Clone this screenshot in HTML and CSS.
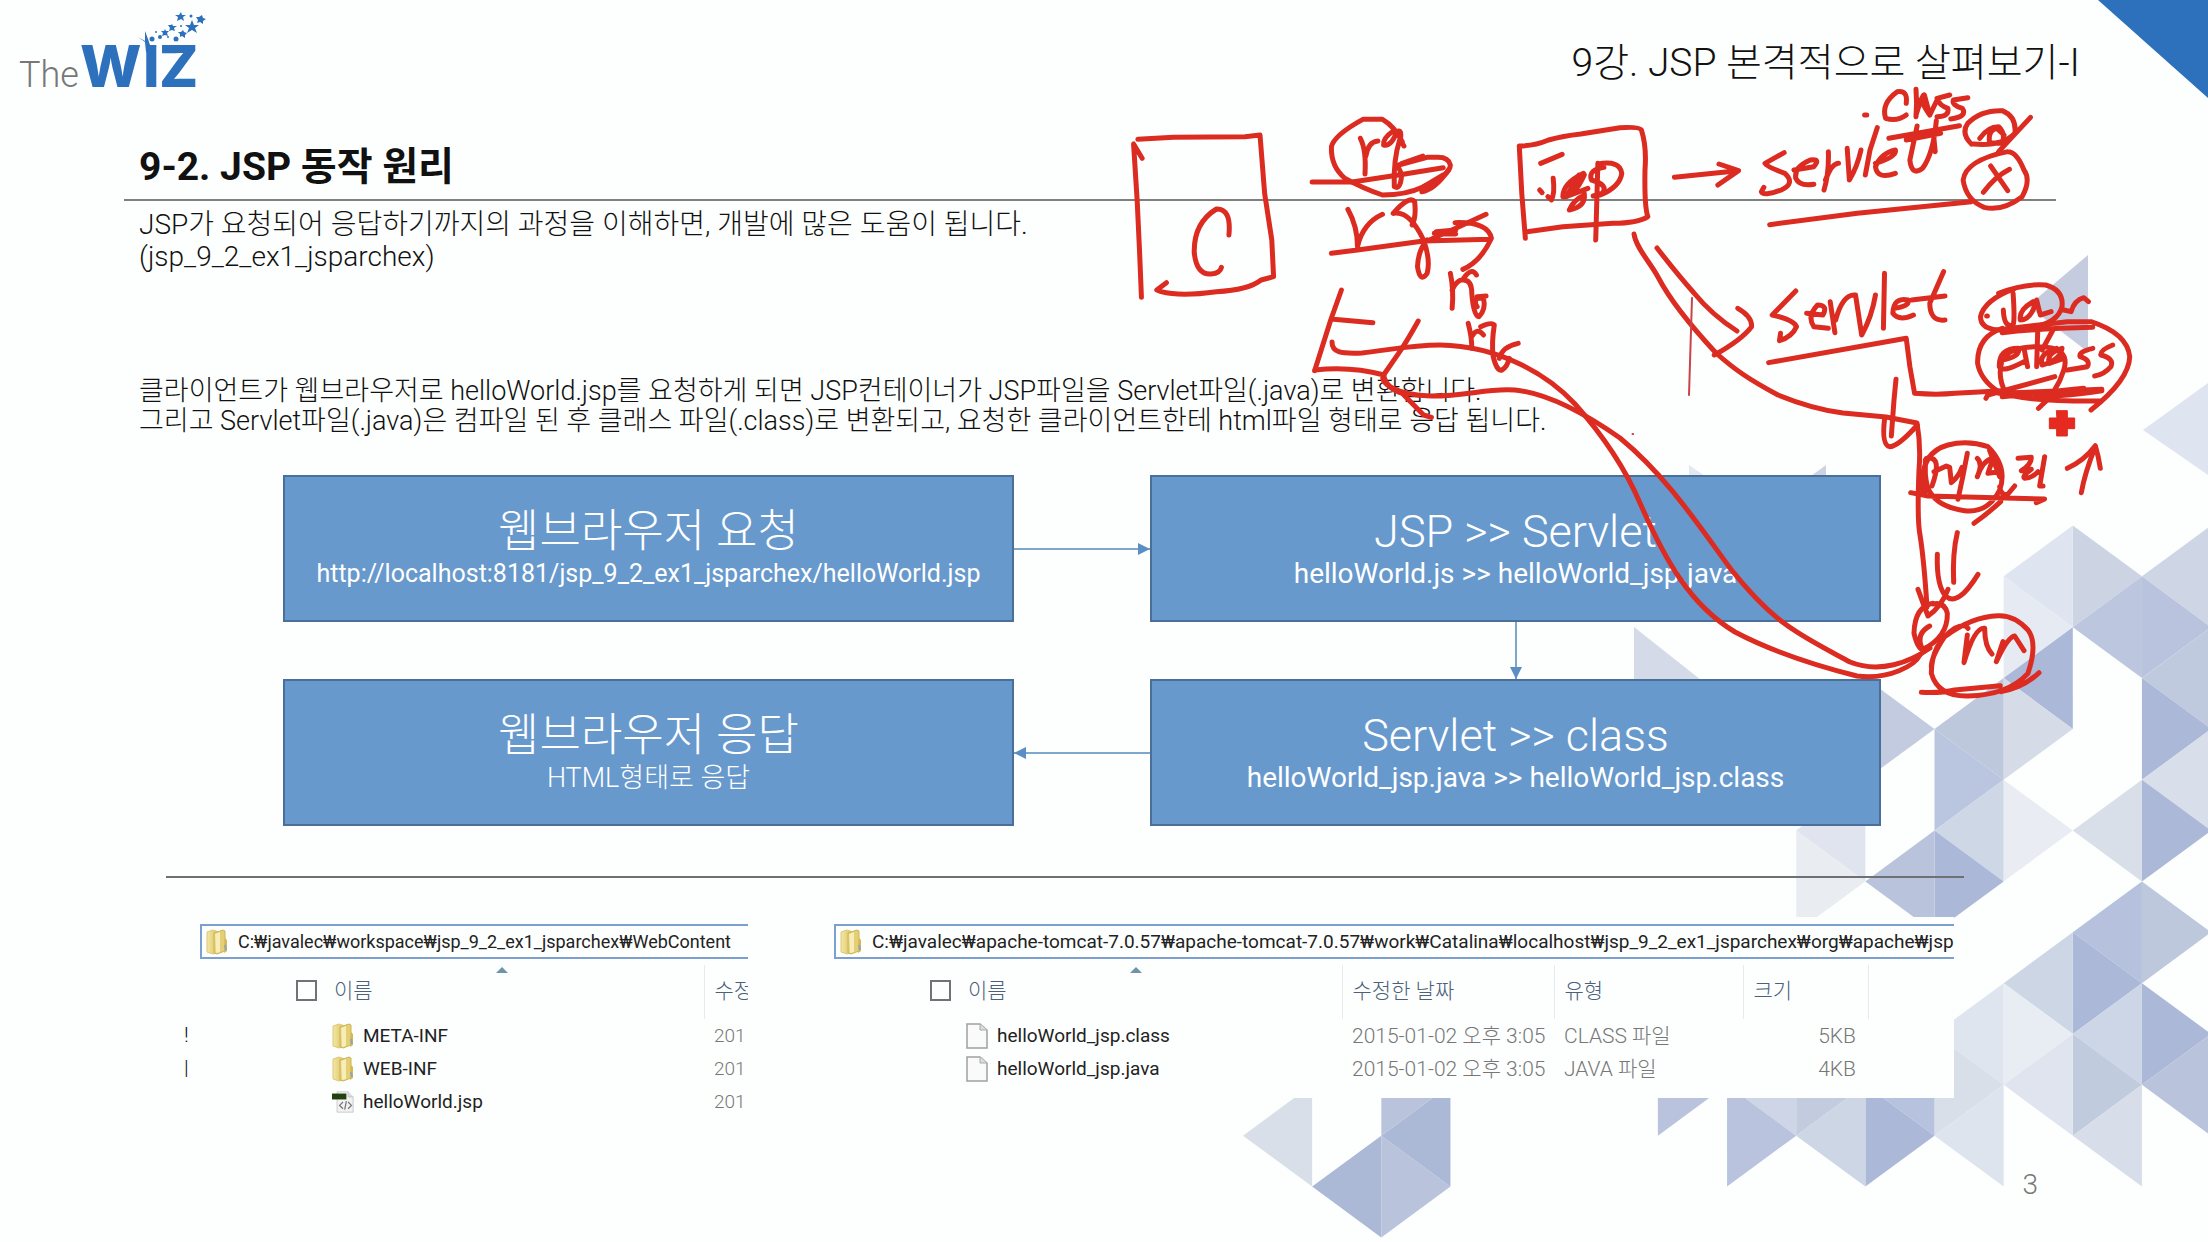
FILE: index.html
```html
<!DOCTYPE html>
<html lang="ko">
<head>
<meta charset="utf-8">
<title>9강. JSP 본격적으로 살펴보기-I</title>
<link rel="stylesheet" href="styles.css">
</head>
<body>
<svg class="defs" aria-hidden="true">
  <defs>
    <linearGradient id="gold" x1="0" x2="1"><stop offset="0" stop-color="#f3e7a4"/><stop offset="1" stop-color="#d9bf58"/></linearGradient>
    <symbol id="folder" viewBox="0 0 22 26">
      <path d="M1 3l6-2 6 2v20l-6 2-6-2z" fill="url(#gold)" stroke="#dcc97c"/>
      <path d="M8 4l9-3 2 1v20l-8 3-3-1z" fill="#e4cf74" stroke="#cdb456"/>
      <path d="M9 5l5-2v20l-4 1z" fill="#f6edb8"/>
      <path d="M19 9l2 2v11l-3 2z" fill="#d5b84f"/>
      <path d="M19 16l1 5" stroke="#8fa6b8" stroke-width="2"/>
    </symbol>
    <symbol id="page" viewBox="0 0 22 26">
      <path d="M1 1h13l7 6v18H1z" fill="#fafafa" stroke="#a0a0a0" stroke-width="1.5"/>
      <path d="M14 1v6h7" fill="#ddd" stroke="#a8a8a8"/>
    </symbol>
    <symbol id="jspfile" viewBox="0 0 26 26">
      <path d="M6 1h13l6 6v18H6z" fill="#f2f2f2" stroke="#c2c2c2"/>
      <path d="M19 1v6h6" fill="#ddd" stroke="#c2c2c2"/>
      <path d="M0 3h17v7H0z" fill="#234012"/>
      <path d="M13 13l-4 4 4 4M19 13l4 4-4 4M17 12l-2 10" fill="none" stroke="#777" stroke-width="1.5"/>
    </symbol>
  </defs>
</svg>
<div class="slide">
  <svg class="layer" viewBox="0 0 2208 1242" preserveAspectRatio="none" aria-hidden="true">
    <path fill="#2d70bc" d="M2098 0H2208V98z"/>
    <path fill="#c5cce0" d="M2088 255V352L2028 306z"/>
    <path fill="#dfe5f0" d="M2143 430L2208 383V475z"/>
    <path fill="#e3e8f1" d="M1689 465V476H1705z"/>
    <path fill="#cdd3e3" d="M1826 465V476H1811z"/>
    <path fill="#d4dae7" d="M1634 627V680H1701z"/>
    <g transform="translate(1243 525.5) scale(69.15 50.85)">
      <path fill="#ced6e5" d="M13 1l1-1v2z"/>
      <path fill="#b9c3dd" d="M13 1v2l1-1z"/>
      <path fill="#c0cadf" d="M13 3l1-1v2z"/>
      <path fill="#abb8d7" d="M13 3v2l1-1z"/>
      <path fill="#d8dfea" d="M13 5l1-1v2z"/>
      <path fill="#abb8d8" d="M13 5v2l1-1z"/>
      <path fill="#bec8dd" d="M13 7v2l1-1z"/>
      <path fill="#abb8d8" d="M13 9v2l1-1z"/>
      <path fill="#b9c4dc" d="M13 11l1-1v2z"/>
      <path fill="#ccd4e3" d="M12 0v2l1-1z"/>
      <path fill="#bcc6de" d="M12 2l1-1v2z"/>
      <path fill="#d8dfe9" d="M12 6l1-1v2z"/>
      <path fill="#b5c1dd" d="M12 8l1-1v2z"/>
      <path fill="#abb8d8" d="M12 8v2l1-1z"/>
      <path fill="#ccd6e6" d="M12 10l1-1v2z"/>
      <path fill="#c1cbde" d="M12 10v2l1-1z"/>
      <path fill="#d8dee9" d="M12 12l1-1v2z"/>
      <path fill="#dfe5f0" d="M11 1l1-1v2z"/>
      <path fill="#e6ebf3" d="M11 1v2l1-1z"/>
      <path fill="#abb8d7" d="M11 3l1-1v2z"/>
      <path fill="#d5dce8" d="M11 3v2l1-1z"/>
      <path fill="#e9edf3" d="M11 5v2l1-1z"/>
      <path fill="#cdd6e5" d="M11 9l1-1v2z"/>
      <path fill="#e8ecf3" d="M11 9v2l1-1z"/>
      <path fill="#dfe4ef" d="M11 11l1-1v2z"/>
      <path fill="#bec8dd" d="M10 4l1-1v2z"/>
      <path fill="#bac5df" d="M10 4v2l1-1z"/>
      <path fill="#cdd7e6" d="M10 6l1-1v2z"/>
      <path fill="#abb8d8" d="M10 6v2l1-1z"/>
      <path fill="#dfe5ef" d="M10 10l1-1v2z"/>
      <path fill="#d9dfe9" d="M10 10v2l1-1z"/>
      <path fill="#dee4ee" d="M10 12l1-1v2z"/>
      <path fill="#c2cbdf" d="M9 3v2l1-1z"/>
      <path fill="#b9c4dc" d="M9 7l1-1v2z"/>
      <path fill="#b6c2de" d="M9 11l1-1v2z"/>
      <path fill="#abb8d8" d="M9 11v2l1-1z"/>
      <path fill="#dfe4ee" d="M8 6l1-1v2z"/>
      <path fill="#e9edf2" d="M8 6v2l1-1z"/>
      <path fill="#c2ccde" d="M8 10v2l1-1z"/>
      <path fill="#ccd6e5" d="M8 12l1-1v2z"/>
      <path fill="#cdd5e7" d="M7 11l1-1v2z"/>
      <path fill="#b9c3dd" d="M7 11v2l1-1z"/>
      <path fill="#b9c3dd" d="M6 10v2l1-1z"/>
      <path fill="#d9dfe9" d="M0 12l1-1v2z"/>
      <path fill="#abb8d6" d="M1 13l1-1v2z"/>
      <path fill="#b9c4dc" d="M2 12v2l1-1z"/>
      <path fill="#abb8d6" d="M2 12l1-1v2z"/>
      <path fill="#b9c4dc" d="M2 10v2l1-1z"/>
    </g>
  </svg>

  <header class="top">
    <svg class="logo" viewBox="0 0 220 100" role="img" aria-label="The WIZ">
      <text class="logo-the" x="19" y="87">The</text>
      <text class="logo-wiz" x="80 143 159" y="87">WIZ</text>
      <g fill="#2d70bc">
        <path d="M138 37l7 4V31l3 8 2 6 8 2-8-1 5 10-9-4-1-10z"/>
        <path d="M192 20l2 5 5 0-4 3 2 5-5-3-5 3 2-5-4-3 5 0z"/>
        <path d="M181 12l1 3 4 0-3 2 1 4-3-2-4 2 1-4-3-2 4 0zM202 15l1 3 3 1-3 2 0 3-3-2-3 1 1-3-2-3 3 0zM183 30l1 2 3 1-2 2 0 3-3-2-2 1 0-3-2-2 3 0zM172 24l1 2 4 0-3 2 1 3-3-1-3 1 1-3-2-3 3 0zM165 29l1 2 3 0-2 2 1 3-3-1-3 1 1-3-2-2 3 0z"/>
        <circle cx="152" cy="39" r="2.500"/><circle cx="160" cy="37" r="2"/><circle cx="176" cy="39" r="2.500"/><circle cx="191" cy="16" r="1.500"/><circle cx="168" cy="37" r="1"/><circle cx="181" cy="26" r="1"/><circle cx="156" cy="32" r="1"/>
      </g>
    </svg>
    <h1 class="lecture">9강. JSP 본격적으로 살펴보기-I</h1>
  </header>

  <main class="main">
    <section class="intro">
      <h2 class="section-title">9-2. JSP 동작 원리</h2>
      <p class="lead">JSP가 요청되어 응답하기까지의 과정을 이해하면, 개발에 많은 도움이 됩니다.<br>(jsp_9_2_ex1_jsparchex)</p>
      <p class="detail">클라이언트가 웹브라우저로 helloWorld.jsp를 요청하게 되면 JSP컨테이너가 JSP파일을 Servlet파일(.java)로 변환합니다.<br>그리고 Servlet파일(.java)은 컴파일 된 후 클래스 파일(.class)로 변환되고, 요청한 클라이언트한테 html파일 형태로 응답 됩니다.</p>
    </section>

    <section class="flow">
      <div class="step"><h3>웹브라우저 요청</h3><p class="url">http://localhost:8181/jsp_9_2_ex1_jsparchex/helloWorld.jsp</p></div>
      <div class="link right"></div>
      <div class="step"><h3>JSP &gt;&gt; Servlet</h3><p>helloWorld.js &gt;&gt; helloWorld_jsp.java</p></div>
      <div class="link down"></div>
      <div class="step"><h3>웹브라우저 응답</h3><p class="plain">HTML형태로 응답</p></div>
      <div class="link left"></div>
      <div class="step"><h3>Servlet &gt;&gt; class</h3><p>helloWorld_jsp.java &gt;&gt; helloWorld_jsp.class</p></div>
    </section>

    <hr class="divider">

    <section class="explorers">
      <div class="explorer first">
        <div class="address"><svg class="icon"><use href="#folder"/></svg><span>C:₩javalec₩workspace₩jsp_9_2_ex1_jsparchex₩WebContent</span></div>
        <div class="pane">
          <div class="tree"><span>!</span><span>|</span></div>
          <table class="files">
            <thead><tr><th class="name"><input type="checkbox" aria-label="모두 선택">이름<i class="sort"></i></th><th class="date">수정</th></tr></thead>
            <tbody>
              <tr><td class="name"><svg class="icon"><use href="#folder"/></svg>META-INF</td><td>201</td></tr>
              <tr><td class="name"><svg class="icon"><use href="#folder"/></svg>WEB-INF</td><td>201</td></tr>
              <tr><td class="name"><svg class="icon"><use href="#jspfile"/></svg>helloWorld.jsp</td><td>201</td></tr>
            </tbody>
          </table>
        </div>
      </div>
      <div class="explorer second">
        <div class="address"><svg class="icon"><use href="#folder"/></svg><span>C:₩javalec₩apache-tomcat-7.0.57₩apache-tomcat-7.0.57₩work₩Catalina₩localhost₩jsp_9_2_ex1_jsparchex₩org₩apache₩jsp</span></div>
        <div class="pane">
          <table class="files">
            <thead><tr><th class="name"><input type="checkbox" aria-label="모두 선택">이름<i class="sort"></i></th><th class="date">수정한 날짜</th><th class="type">유형</th><th class="size">크기</th><th></th></tr></thead>
            <tbody>
              <tr><td class="name"><svg class="icon"><use href="#page"/></svg>helloWorld_jsp.class</td><td>2015-01-02 오후 3:05</td><td>CLASS 파일</td><td class="num">5KB</td><td></td></tr>
              <tr><td class="name"><svg class="icon"><use href="#page"/></svg>helloWorld_jsp.java</td><td>2015-01-02 오후 3:05</td><td>JAVA 파일</td><td class="num">4KB</td><td></td></tr>
            </tbody>
          </table>
        </div>
      </div>
    </section>
  </main>
  <footer class="page-no">3</footer>

  <!-- red pen strokes drawn over the slide -->
  <svg class="layer ink" viewBox="0 0 2208 1242" preserveAspectRatio="none" aria-hidden="true">
    <g>
      <path d="M1332 342C1332 352 1340 354 1362 353C1390 350 1410 345 1440 345C1500 346 1548 375 1575 404C1600 432 1625 468 1640 503C1665 560 1690 605 1735 632C1775 653 1825 668 1857 676C1890 680 1915 665 1920 655"/>
      <path d="M1315 370C1340 367 1362 369 1384 375C1378 382 1395 395 1431 396C1470 396 1485 388 1515 390C1545 393 1580 410 1620 438C1665 475 1695 520 1730 568C1775 625 1800 635 1850 662C1880 674 1910 662 1930 648"/>
      <path d="M1634 234C1636 248 1650 262 1658 277C1670 300 1690 325 1716 353C1735 370 1750 380 1778 395C1800 404 1820 410 1843 413L1886 417L1917 423Q1921 445 1919 470Q1917 520 1920 535Q1924 560 1927 607"/>
      <path d="M1657 248Q1678 275 1694 293Q1712 315 1737 331"/>
      <path class="thin" d="M1692 298L1689 395"/>
    </g>
    <g transform="translate(1120 60) scale(.35714 .33333)">
      <path d="M50 238L150 232L350 230L392 225L405 400L425 540L430 650L395 660Q360 690 270 695Q170 710 115 695L103 690L130 668M62 295L38 252L48 420L55 580L60 712"/>
      <path d="M305 525Q312 445 270 447Q205 490 208 580Q215 645 255 642Q280 640 284 622"/>
      <path d="M790 245Q770 200 735 178H680Q600 225 592 260Q590 320 630 355Q680 385 735 405Q800 405 850 380Q925 345 925 315Q920 292 890 292H860L780 315"/>
      <path d="M673 235Q690 270 686 342M688 290Q695 245 722 243M765 213Q735 235 738 255Q760 260 775 215Q790 205 785 240L795 258M783 240Q765 300 768 380Q785 390 788 350Q785 320 770 318"/>
      <path d="M538 366H650L780 345L905 323M848 288L790 310M845 395Q880 390 920 330M850 380L905 345"/>
      <path d="M638 448Q665 500 665 560Q680 490 735 463M765 460Q810 405 825 425Q830 470 818 495M765 460Q810 450 850 540Q870 600 860 640Q840 670 833 620Q835 570 860 540M592 580L665 570L850 543L1035 538M860 543L940 505L1025 463M880 520L940 522M885 515L940 510M938 488Q1030 485 1040 535Q1010 605 960 628"/>
      <path d="M925 640Q935 690 930 745M930 690Q945 655 965 660M962 655Q985 620 998 645M962 660Q985 660 985 700Q990 770 1005 770Q1025 750 1018 715H1000Q990 725 1000 740M1000 710L1025 708"/>
      <path d="M975 790Q985 830 985 865M985 830Q1000 800 1018 825M1010 800Q1040 785 1048 795Q1040 850 1045 890Q1055 935 1070 930Q1085 920 1090 895M1115 850Q1070 860 1062 895"/>
      <path d="M620 690L590 780L545 932M598 778L708 788M835 783Q800 850 780 880L738 945Q745 985 790 1000L850 1065L872 1072"/>
      <path d="M1118 258L1125 400L1135 535M1118 258Q1160 258 1200 240Q1240 228 1290 222L1400 203Q1455 200 1460 210Q1475 260 1470 330Q1468 440 1478 470Q1450 490 1380 490L1240 500L1140 515"/>
      <path d="M1178 310L1238 283M1175 390L1182 398M1213 355Q1218 400 1208 420L1198 410M1298 340Q1240 370 1240 410Q1270 415 1300 345Q1270 370 1262 405L1310 385M1285 345L1255 400M1300 400Q1305 440 1258 450Q1270 420 1300 405M1355 322Q1310 330 1320 360Q1370 375 1350 400L1325 408M1338 310L1332 540M1338 312Q1400 300 1405 340Q1400 380 1345 405"/>
      <path class="thin" d="M1435 1122h2"/>
    </g>
    <g transform="translate(1640 0) scale(.36224 .33333)">
      <path d="M95 532L270 512M218 492L272 512L215 555"/>
      <path d="M398 458L345 490Q350 500 400 520Q430 550 390 570Q340 590 335 575L342 562M425 510L480 500Q500 475 470 480Q425 500 430 535Q440 560 480 553M520 455Q522 520 508 570M512 540Q530 490 548 490M572 445L578 540Q600 500 610 450M655 383L635 450L622 525M650 490Q710 470 705 450Q665 460 650 500Q655 540 705 520M765 378L745 480Q750 530 780 505Q810 460 818 362M810 400L815 455M687 415L882 377M735 420L830 400"/>
      <path d="M620 345h6M735 310Q740 270 710 275Q665 310 678 355Q710 365 735 345M762 268Q765 310 762 350M762 345Q780 280 785 285L800 345M775 300Q790 330 800 345L820 300M855 285L820 295Q825 315 850 325Q855 350 820 350M905 293L865 300Q860 315 890 325Q905 350 858 357"/>
      <path d="M915 432Q885 400 905 370Q940 330 1000 332Q1040 350 1035 400Q1000 440 920 432M1078 352L990 455M938 415Q960 380 990 380Q1010 400 1000 430L965 428Q960 390 985 385L1005 405"/>
      <path d="M1015 455Q900 480 892 540Q900 600 950 622Q1000 635 1055 590Q1080 540 1060 510Q1040 455 1015 455M968 498L1015 572M1020 508Q980 530 948 577M358 674L600 640L915 605"/>
      <path d="M430 873L365 945Q425 960 432 980Q420 1010 385 1022L388 1000M460 940L505 945Q520 915 490 915Q460 950 480 980L520 985M525 905L538 998M540 960Q560 880 595 885M595 885L612 1005Q640 950 650 885M675 820L672 985M700 925Q745 920 740 900Q700 890 698 940Q715 965 755 945M838 815L800 910Q800 965 842 960M750 900L842 888"/>
      <path d="M355 1088L735 1015L745 1100L758 1180Q820 1185 870 1180L1000 1172M270 925Q310 950 308 980Q280 1020 205 1065"/>
      <path d="M990 880Q1060 850 1120 855Q1170 870 1165 920Q1150 990 1000 990Q940 990 940 950Q950 900 1035 865M957 948h2M1030 880Q1035 960 1030 975Q1005 985 1003 930M1085 905Q1045 930 1050 960Q1080 960 1095 900L1105 945L1135 935M1170 930L1190 935Q1200 900 1225 893L1238 905"/>
      <path d="M985 990L1180 965H1245Q1345 1000 1352 1070Q1350 1140 1245 1230M1000 998Q1100 985 1250 982M1000 985Q930 1010 932 1090Q940 1140 990 1175Q1050 1205 1270 1203M955 1195L960 1185L1145 1130M990 1180L1275 1168M1000 1190L1225 1165M1010 1185Q1100 1200 1275 1172"/>
      <path d="M1000 1080Q1050 1070 1045 1045Q990 1045 992 1100Q1000 1120 1060 1085M1060 1045L1070 1100M1098 990L1095 1100M1150 1045Q1100 1060 1110 1095Q1160 1080 1165 1045Q1120 1060 1130 1090L1170 1075M1140 990L1110 1050M1250 1045Q1210 1055 1215 1070Q1245 1080 1235 1100L1180 1110M1305 1035Q1270 1050 1272 1065Q1310 1075 1300 1100Q1280 1125 1255 1128M1010 1180Q985 1130 1000 1080Q1020 1040 1100 1040Q1190 1040 1170 1110Q1150 1180 1100 1225"/>
    </g>
    <g transform="translate(1688 380) scale(.33333)">
      <path d="M624 -2L618 60L610 168M590 115Q580 195 605 200Q630 200 688 135"/>
      <path class="solid" d="M1106 92h32v22h22v32h-22v22h-32v-22h-22v-32h22z"/>
      <path d="M705 340Q690 220 780 195Q840 180 900 200Q960 260 935 330Q900 400 830 392Q740 380 718 320Q705 260 718 235M712 240V335M715 235Q765 225 732 318M738 275L775 258L785 262L790 308Q812 290 822 262M838 220Q825 290 810 358M868 235Q885 250 868 290Q885 240 915 235L900 280L935 275M905 212L935 290M935 320Q940 350 960 342L980 318M938 365Q900 400 858 430M990 235L1030 232Q1030 255 1000 272L1030 268Q1000 290 1010 295Q1030 295 1050 275M1070 230L1055 318H1065M668 338L720 348L1070 357L1045 368"/>
      <path d="M1180 338Q1190 280 1222 200M1138 265Q1190 240 1222 197Q1232 230 1237 265"/>
      <path d="M808 458Q793 520 797 607M748 523Q745 620 775 650Q810 680 870 583M690 628Q705 670 720 708Q760 680 780 628"/>
      <path d="M735 670Q680 680 678 760Q690 810 705 808Q780 770 778 700Q770 665 735 672M725 738Q685 760 700 800"/>
      <path d="M840 745Q830 730 800 745Q730 790 730 880Q750 950 840 948Q960 945 1020 880Q1050 790 1020 750Q980 705 930 707Q850 710 770 770Q730 830 730 860M838 765L828 848Q860 740 890 745Q890 800 912 822M945 785L925 845Q960 770 980 768L1008 812M700 937Q760 940 800 930L937 917M940 935Q1010 920 1053 878"/>
    </g>
  </svg>
</div>
</body>
</html>
```
FILE: styles.css
```css
* { box-sizing: border-box; }

body {
  margin: 0;
  background: #fdfffe;
  color: #111;
  font-family: Roboto, "Noto Sans CJK KR", sans-serif;
  font-weight: 300;
}

h1, h2, h3, p { margin: 0; font-weight: 300; }

.defs { position: absolute; width: 0; height: 0; }

.slide {
  position: relative;
  min-height: 100vh;
  display: flex;
  flex-direction: column;
  overflow: hidden;
}

.layer {
  position: absolute;
  inset: 0;
  width: 100%;
  height: 100%;
  pointer-events: none;
}

.top, .main, .page-no { position: relative; }

.ink path {
  fill: none;
  stroke: #dc2b21;
  stroke-width: 5px;
  stroke-linecap: round;
  stroke-linejoin: round;
  vector-effect: non-scaling-stroke;
}
.ink .thin { stroke-width: 2px; stroke: #c9434a; }
.ink .solid { fill: #e62a1f; stroke-width: 1px; }

/* header */
.top {
  display: flex;
  justify-content: space-between;
  height: 136px;
  padding-right: 128px;
}
.logo { width: 220px; height: 100px; }
.logo-the { font: 300 36px Roboto, sans-serif; fill: #777; }
.logo-wiz { font: 800 58px Inter, sans-serif; fill: #2d70bc; }
.lecture { font-size: 39px; line-height: 126px; }

/* intro text */
.intro { padding: 0 152px 0 124px; }
.section-title {
  padding-left: 15px;
  font-size: 39px;
  font-weight: 700;
  line-height: 63px;
  border-bottom: 2px solid #7f7f7f;
}
.lead, .detail { padding-left: 15px; font-size: 28px; }
.lead { padding-top: 8px; line-height: 32px; }
.detail { margin-top: 103px; line-height: 30px; font-size: 27px; white-space: nowrap; }

/* flow diagram */
.flow {
  display: grid;
  grid-template-columns: 1fr 136px 1fr;
  grid-template-rows: 147px 57px 147px;
  margin: 39px 327px 0 283px;
}
.step {
  display: flex;
  flex-direction: column;
  align-items: center;
  justify-content: center;
  background: #6799cd;
  border: 2px solid #4a7099;
  color: #fff;
}
.step h3 { font-size: 45px; line-height: 50px; }
.step p { font-size: 28px; line-height: 34px; font-weight: 400; }
.step .url { font-size: 25px; }
.step .plain { font-size: 27px; font-weight: 300; }
.link { position: relative; align-self: center; background: #7fa6cb; }
.link::after { content: ""; position: absolute; border: 6px solid transparent; }
.right, .left { height: 2px; }
.right::after { right: 0; top: -5px; border-left: 12px solid #5b8fc4; border-right: 0; }
.left::after { left: 0; top: -5px; border-right: 12px solid #5b8fc4; border-left: 0; }
.down { grid-column: 3; justify-self: center; width: 2px; height: 57px; }
.down::after { bottom: 0; left: -5px; border-top: 12px solid #5b8fc4; border-bottom: 0; }

.divider {
  margin: 50px 244px 0 166px;
  border: 0;
  border-top: 2px solid #6e7073;
}

/* file explorer captures */
.explorers {
  display: grid;
  grid-template-columns: 572fr 1134fr;
  gap: 72px;
  align-items: start;
  margin: 39px 254px 0 176px;
}
.explorer { min-width: 0; overflow: hidden; padding-top: 7px; background: #fdfffe; font-size: 21px; }
.second { padding-left: 14px; height: 181px; }
.address {
  display: flex;
  align-items: center;
  gap: 10px;
  height: 35px;
  padding-left: 4px;
  border: 2px solid #7d9fd0;
  border-right: 0;
  color: #222;
  font-size: 19px;
  font-weight: 400;
  white-space: nowrap;
}
.first .address { margin-left: 24px; font-size: 18px; }
.icon { width: 22px; height: 26px; flex: none; }
.pane { display: flex; }
.tree {
  display: flex;
  flex-direction: column;
  flex: none;
  width: 96px;
  padding: 60px 0 0 8px;
  line-height: 33px;
}
.files {
  flex: 1;
  width: 100%;
  margin-top: 6px;
  border-collapse: collapse;
  table-layout: fixed;
  white-space: nowrap;
}
.second .files { margin-left: 72px; }
.files th {
  height: 54px;
  padding: 0 0 6px 10px;
  text-align: left;
  font-weight: 300;
  color: #4c607a;
  border-right: 1px solid #e6ebee;
}
.files th:last-child { border-right: 0; }
.files td { height: 33px; padding: 0 0 0 10px; line-height: 26px; color: #777; }
.files .name { width: 436px; padding-left: 24px; position: relative; }
.files td.name { padding-left: 60px; font-size: 19px; color: #222; font-weight: 400; }
.files .date { width: 212px; }
.first .files .name { width: 432px; }
.first .files .date { width: 44px; }
.first td + td { font-size: 19px; }
.files .type { width: 189px; }
.files .size { width: 125px; }
.files .num { text-align: right; padding-right: 12px; }
.files input {
  appearance: none;
  width: 21px;
  height: 21px;
  margin: 0 17px 0 0;
  border: 2px solid #6d7377;
  vertical-align: -3px;
}
.files .icon { vertical-align: -7px; margin-right: 9px; }
.sort {
  position: absolute;
  top: 2px;
  left: 224px;
  border: 6px solid transparent;
  border-top: 0;
  border-bottom: 6px solid #6f93a8;
}

.page-no { padding: 50px 170px 0 0; text-align: right; font-size: 28px; color: #777; }
```
